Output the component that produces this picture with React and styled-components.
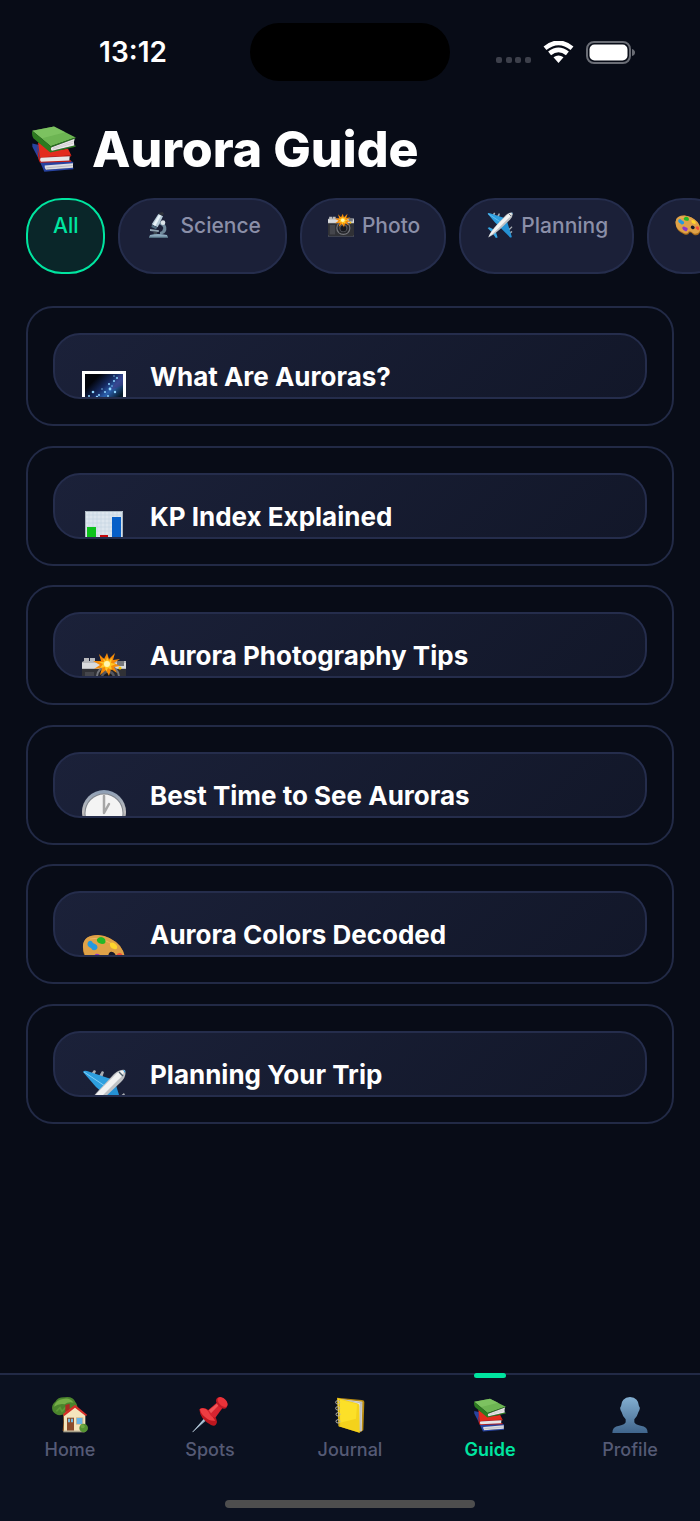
import React, { useCallback, useState } from 'react';
import styled, { createGlobalStyle } from 'styled-components'

const GlobalStyle = createGlobalStyle`
	* {
		box-sizing: border-box;
	}
	body {
		margin: 0;
		background: #080c17;
		color: #fff;
		font-family: Inter, "Liberation Sans", sans-serif;
	}
	button {
		font-family: inherit;
		cursor: pointer;
	}
	svg {
		display: block;
		flex-shrink: 0;
	}
`

const Screen = styled.div`
	display: flex;
	flex-direction: column;
	min-height: 100vh;
	overflow: hidden;
`

/* status bar */
const StatusBar = styled.header`
	display: grid;
	grid-template-columns: 1fr 200px 1fr;
	align-items: center;
	padding-top: 23px;
`
const Clock = styled.time`
	padding-left: 16px;
	font-size: 28px;
	line-height: 36px;
	font-weight: 600;
	text-align: center;
`
const Island = styled.div`
	height: 58px;
	border-radius: 29px;
	background: #000;
`
const StatusIcons = styled.div`
	display: flex;
	justify-content: flex-end;
	align-items: center;
	gap: 12px;
	padding-right: 64px;
`

/* heading */
const Title = styled.h1`
	display: flex;
	align-items: center;
	gap: 10px;
	margin: 0;
	padding: 36px 26px 0;
	font-size: 50px;
	line-height: 64px;
	font-weight: 800;
`
const TitleIcon = styled.span`
	display: flex;
	justify-content: center;
	width: 56px;
`

/* filter chips */
const Chips = styled.div`
	display: flex;
	gap: 13px;
	padding: 17px 26px 32px;
	overflow: hidden;
`
const Chip = styled.button`
	display: flex;
	flex-shrink: 0;
	align-items: flex-start;
	gap: 8px;
	height: 76px;
	padding: ${props => props.$icon ? '12px 24px 12px 26px' : '12px 25px'};
	border: 2px solid ${props => props.$active ? '#00e5a0' : '#252d4c'};
	border-radius: 36px;
	background: ${props => props.$active ? '#0a2629' : '#1b2038'};
	color: ${props => props.$active ? '#00e5a0' : '#8b8fa8'};
	font-size: 21px;
	line-height: 27px;
	font-weight: 500;
`

/* guide list */
const Main = styled.main`
	flex: 1;
`
const List = styled.div`
	display: flex;
	flex-direction: column;
	justify-content: space-between;
	min-height: 818px;
	padding: 0 26px;
`
const Card = styled.article`
	padding: 25px;
	border: 2px solid #222a46;
	border-radius: 27px;
`
const CardHead = styled.button`
	display: flex;
	align-items: flex-start;
	gap: 24px;
	width: 100%;
	height: 66px;
	padding: 27px 27px 0;
	border: 2px solid #252d4c;
	border-radius: 27px;
	background: linear-gradient(135deg, #1b2139, #121729);
	color: #fff;
	text-align: left;
	overflow: hidden;
`
const CardIcon = styled.span`
	padding-top: 9px;
`
const CardTitle = styled.span`
	font-size: 26px;
	line-height: 30px;
	font-weight: 700;
`

/* bottom tabs */
const TabBar = styled.footer`
	border-top: 2px solid #222a46;
	background: #0b1120;
`
const Tabs = styled.nav`
	display: grid;
	grid-template-columns: repeat(5, 1fr);
`
const Tab = styled.a`
	position: relative;
	display: flex;
	flex-direction: column;
	align-items: center;
	gap: 5px;
	padding-top: 22px;
	color: ${props => props.$active ? '#00e5a0' : '#555a75'};
	font-size: 18px;
	line-height: 24px;
	font-weight: ${props => props.$active ? 600 : 500};
	text-decoration: none;
`
const Marker = styled.span`
	position: absolute;
	top: -2px;
	width: 32px;
	height: 5px;
	border-radius: 3px;
	background: #00e5a0;
`
const HomeIndicator = styled.div`
	width: 250px;
	height: 8px;
	margin: 38px auto 13px;
	border-radius: 4px;
	background: #4e4e4e;
`

const Books = ({ width, height }) => (
	<svg width={ width } height={ height } viewBox="0 0 132 137" aria-hidden="true">
		<path d="M1 52L28 58 124 108 123 114 42 120 44 131 124 124 124 129 37 137Q20 96 1 62Z" fill="#2743a0" />
		<path d="M38 118L123 111 123 125 42 131Q37 124 38 118Z" fill="#dcdde2" />
		<path d="M43 125L122 118" stroke="#a5a7b4" strokeWidth="2" />
		<path d="M18 48L62 74 108 68 118 88 24 94Z" fill="#e32b1c" />
		<path d="M18 48Q16 72 23 93L118 87 117 91 28 96Q24 102 28 105L117 102 118 107 24 110Q14 94 18 48Z" fill="#c51d13" />
		<path d="M26 95L113 90 112 103 27 107Q22 101 26 95Z" fill="#e8e6e6" />
		<path d="M1 14L66 1 131 34 56 60Z" fill="#6db553" />
		<path d="M1 14L66 1 100 18 30 36Z" fill="#83c767" opacity=".7" />
		<path d="M1 14L56 60 131 33 130 37 61 62Q55 68 60 74L130 57 131 62 55 79 4 36Q-2 24 1 14Z" fill="#2c7a1f" />
		<path d="M59 63L128 38Q124 48 127 58L60 74Q54 68 59 63Z" fill="#eceaea" />
		<path d="M62 69L124 51M62 66L125 45" stroke="#b7b3b4" strokeWidth="1.5" />
	</svg>
)

const Microscope = () => (
	<svg width="26" height="26" viewBox="0 0 78 78" aria-hidden="true">
		<path d="M42 28Q64 36 61 54 58 66 42 68L42 60Q51 57 52 48 50 40 38 37Z" fill="#70899b" />
		<path d="M37 3L50 0 54 6 44 14Z" fill="#30343c" />
		<path d="M37 6L51 13 35 46 17 37Z" fill="#b6cad8" />
		<path d="M39 8L45 11 28 42 21 38Z" fill="#e9f3f9" />
		<path d="M18 38L34 46 30 52 16 45Z" fill="#4f6b80" />
		<circle cx="51" cy="32" r="7" fill="#dce4e9" />
		<path d="M12 51L39 55 38 60 12 57Z" fill="#92a5b2" />
		<path d="M22 59L34 60 33 69 24 69Z" fill="#3d4852" />
		<path d="M12 69Q35 63 63 69L66 77 9 77Z" fill="#8ba9bd" />
		<path d="M9 74H66V78H9Z" fill="#526d80" />
	</svg>
)

const Camera = ({ size }) => (
	<svg width={ size } height={ size } viewBox="0 0 44 44" aria-hidden="true">
		<path d="M2 11V8H7V11H8V8H13V11H44V41H0V12Z" fill="#b9babd" />
		<path d="M0 19H44V39Q44 41 42 41H2Q0 41 0 39Z" fill="#303136" />
		<path d="M0 13H44V18H0Z" fill="#d9dadc" />
		<path d="M3 22H12V38H3Z" fill="#45464c" />
		<path d="M35 11H42V16H35Z" fill="#76787c" />
		<circle cx="26" cy="27" r="12" fill="#74767c" />
		<circle cx="26" cy="27" r="10" fill="#26272c" />
		<circle cx="26" cy="27" r="7" fill="#54565e" />
		<circle cx="26" cy="28" r="5" fill="#17181d" />
		<circle cx="38" cy="18" r="1.5" fill="#ffc400" />
		<path d="M25 3L27 9 33 3 31 10 38 9 32 13 38 16 32 17 35 23 29 19 27 26 24 20 18 25 20 18 12 19 18 15 11 11 19 11 17 4 22 9Z" fill="#f58a08" />
		<path d="M25 7L27 11 30 8 29 13 34 14 29 16 30 20 26 18 24 22 23 17 18 18 21 14 17 12 22 12 21 8 24 11Z" fill="#ffc927" />
		<circle cx="25" cy="14" r="3" fill="#fff7b0" />
	</svg>
)

const Plane = ({ size }) => (
	<svg width={ size } height={ size } viewBox="0 0 44 44" aria-hidden="true">
		<path d="M9 5L12 1 14 2 12 7ZM17 7L20 2 22 3 20 9ZM36 29L42 24 43 26 38 31ZM36 35L42 32 43 34 38 38Z" fill="#a9adb2" />
		<path d="M1 3Q2 1 5 2L32 11 21 24 14 18Z" fill="#2e9fdf" />
		<path d="M33 13L42 42Q42 44 39 43L21 25Z" fill="#2592d5" />
		<path d="M1 27L4 26 14 31 18 43 15 44 9 35Z" fill="#35a6e4" />
		<path d="M2 3L23 17" stroke="#83d0f7" strokeWidth="1" />
		<path d="M2 43Q5 34 17 21L32 5Q38 0 43 1 45 7 39 13L22 29Q11 39 2 43Z" fill="#bfc1c4" />
		<path d="M3 42Q7 33 19 20L33 6Q38 1 42 2 42 6 36 11L19 28Q9 38 3 42Z" fill="#f2f2f2" />
		<path d="M37 3L41 7" stroke="#4a5c69" strokeWidth="1.5" />
		<path d="M41 1Q44 1 43 4Z" fill="#2e9fdf" />
	</svg>
)

const Palette = ({ size }) => (
	<svg width={ size } height={ size } viewBox="0 0 44 44" aria-hidden="true">
		<path d="M1 17Q2 6 16 6 29 7 38 17 45 27 42 35 38 42 31 38 26 33 24 35 23 40 16 38 0 32 1 17Z" fill="#a86a1b" />
		<path d="M1 16Q2 6 16 6 29 7 38 17 44 25 42 32 38 39 31 36 26 31 23 33 22 38 16 36 0 30 1 16Z" fill="#dfa248" />
		<path d="M8 10Q20 7 34 18" fill="none" stroke="#efba64" strokeWidth="1" />
		<ellipse cx="30" cy="26" rx="3.5" ry="3" transform="rotate(35 30 26)" fill="#17182a" />
		<path d="M6 13Q9 10 11 14 17 16 15 20 11 23 9 19 4 17 6 13Z" fill="#2499df" />
		<path d="M15 10Q19 6 23 10 25 15 20 15 14 14 15 10Z" fill="#23b827" />
		<path d="M28 14Q32 12 35 17 36 21 32 20 27 19 28 14Z" fill="#ffd52c" />
		<path d="M35 25Q40 22 41 28 40 33 37 29 34 29 35 25Z" fill="#f3503c" />
		<path d="M12 27Q14 23 18 26 24 27 20 32 15 34 12 27Z" fill="#8d37c7" />
	</svg>
)

const MilkyWay = () => (
	<svg width="44" height="44" viewBox="0 0 44 44" aria-hidden="true">
		<defs>
			<linearGradient id="sky" x1="0" y1="0" x2="1" y2="1">
				<stop offset=".2" stopColor="#02040b" />
				<stop offset=".42" stopColor="#172c66" />
				<stop offset=".55" stopColor="#2b60ae" />
				<stop offset=".75" stopColor="#071b2b" />
			</linearGradient>
		</defs>
		<path d="M0 0H44V44H0Z" fill="#fff" />
		<path d="M3 3H41V41H3Z" fill="url(#sky)" />
		<path d="M36 5L41 3V14L29 19Z" fill="#403981" opacity=".6" />
		<g fill="#8fd6ff">
			<circle cx="35" cy="7" r="1" /><circle cx="32" cy="10" r="1" /><circle cx="32" cy="5" r=".7" />
			<circle cx="27" cy="13" r="1" /><circle cx="28" cy="18" r="1.4" /><circle cx="33" cy="21" r="1.2" />
			<circle cx="23" cy="21" r="1" /><circle cx="17" cy="24" r="1" /><circle cx="11" cy="21" r="1.3" />
			<circle cx="26" cy="25" r="1" /><circle cx="7" cy="25" r="1" /><circle cx="20" cy="18" r=".7" />
			<circle cx="15" cy="26" r="1.2" /><circle cx="30" cy="15" r=".7" />
		</g>
	</svg>
)

const Chart = () => (
	<svg width="44" height="44" viewBox="0 0 44 44" aria-hidden="true">
		<path d="M3 0H41V44H3Z" fill="#dde6ee" />
		<path d="M7 1V44M11 1V44M15 1V44M19 1V44M23 1V44M27 1V44M31 1V44M35 1V44M39 1V44M4 4H40M4 8H40M4 12H40M4 16H40M4 20H40M4 24H40M4 28H40" stroke="#c3d3e0" strokeWidth=".6" />
		<path d="M5 16H14V44H5Z" fill="#0cc21b" />
		<path d="M18 24H26V44H18Z" fill="#c5080c" />
		<path d="M30 6H39V44H30Z" fill="#075fc8" />
		<path d="M3.5 44V.5H40.5V44" fill="none" stroke="#aab6c0" />
	</svg>
)

const ClockFace = () => (
	<svg width="44" height="44" viewBox="0 0 44 44" aria-hidden="true">
		<defs>
			<linearGradient id="rim" x1="0" y1="0" x2="0" y2="1">
				<stop offset="0" stopColor="#8b9db4" />
				<stop offset=".5" stopColor="#c1bfbf" />
				<stop offset="1" stopColor="#83807f" />
			</linearGradient>
		</defs>
		<circle cx="22" cy="22" r="22" fill="url(#rim)" />
		<circle cx="22" cy="23" r="19.5" fill="#80858c" />
		<circle cx="22" cy="23" r="18.5" fill="#f4f4f4" />
		<path d="M22 6V23L27 14" fill="none" stroke="#a6a6a6" strokeWidth="2.5" strokeLinecap="round" strokeLinejoin="round" />
	</svg>
)

const House = () => (
	<svg width="36" height="36" viewBox="0 0 108 108" aria-hidden="true">
		<path d="M33 50H48V102H32Q36 74 33 50Z" fill="#94612c" />
		<path d="M2 42Q-4 24 10 14 18 0 38 1 62-3 70 15 82 28 72 44 58 57 38 52 13 60 2 42Z" fill="#4b842d" />
		<path d="M6 29Q12 8 33 6 53 1 65 17 48 13 38 22 20 19 6 29Z" fill="#75ae47" />
		<path d="M13 43L24 32 30 43 43 29 53 40" fill="none" stroke="#5e9a38" strokeWidth="5" />
		<path d="M40 24L53 20V38L40 45Z" fill="#a92a22" />
		<path d="M36 50L69 26 100 52V104H36Z" fill="#f5e5bd" />
		<path d="M33 51L69 23 106 54 101 57 69 32 37 57Z" fill="#d52e28" />
		<path d="M45 62H66V101H45Z" fill="#8b4c2b" />
		<path d="M48 65H54V76H48ZM57 65H63V76H57Z" fill="#75bce3" />
		<path d="M72 61H94V83H72Z" fill="#d4b787" />
		<path d="M74 63H91V81H74Z" fill="#68b5e8" />
		<path d="M34 101H98V106H34Z" fill="#aaa28b" />
		<circle cx="95" cy="93" r="13" fill="#559332" />
		<circle cx="92" cy="88" r="6" fill="#71ab43" />
	</svg>
)

const Pin = () => (
	<svg width="36" height="36" viewBox="0 0 108 108" aria-hidden="true">
		<path d="M0 107L42 57 50 64Z" fill="#91abc0" />
		<path d="M2 105L44 61" stroke="#dbe8f2" strokeWidth="2" />
		<path d="M22 37Q34 27 50 40 72 54 75 75 72 91 57 84 24 67 22 37Z" fill="#bd171f" />
		<path d="M24 36Q37 29 51 44L70 71Q54 74 39 60 25 50 24 36Z" fill="#ed3d42" />
		<path d="M48 40L77 15 93 31 70 62Q54 61 48 40Z" fill="#d82430" />
		<path d="M51 40L78 17 83 22 57 49Z" fill="#f05557" />
		<ellipse cx="89" cy="18" rx="13" ry="20" transform="rotate(-45 89 18)" fill="#bf1a25" />
		<ellipse cx="92" cy="15" rx="11" ry="18" transform="rotate(-45 92 15)" fill="#e93239" />
	</svg>
)

const Notebook = () => (
	<svg width="36" height="36" viewBox="0 0 108 108" aria-hidden="true">
		<path d="M15 2L89 9Q97 9 97 15L94 100 82 107 20 88Z" fill="#b88b10" />
		<path d="M22 6L91 14 89 103 79 102Z" fill="#e4e5e6" />
		<path d="M29 8L90 18M85 18L83 102M88 16L86 103" stroke="#a4a6a8" strokeWidth="2" />
		<path d="M16 3L75 19Q82 20 82 26L83 107 20 88Z" fill="#f4d21c" />
		<path d="M18 6L75 22 72 65 22 78Z" fill="#ffe52e" opacity=".7" />
		<path d="M22 8L23 87" stroke="#c69b12" strokeWidth="2" />
		<g fill="none" stroke="#b8b5a7" strokeWidth="3">
			<ellipse cx="17" cy="16" rx="6" ry="5" /><ellipse cx="17" cy="34" rx="6" ry="5" />
			<ellipse cx="18" cy="52" rx="6" ry="5" /><ellipse cx="18" cy="73" rx="6" ry="5" />
		</g>
	</svg>
)

const Bust = () => (
	<svg width="36" height="36" viewBox="0 0 108 108" aria-hidden="true">
		<defs>
			<linearGradient id="bust" x1="0" y1="0" x2="0" y2="1">
				<stop offset="0" stopColor="#83afd1" />
				<stop offset="1" stopColor="#40658c" />
			</linearGradient>
		</defs>
		<path d="M54 0Q80 2 81 28 87 33 79 46 76 59 67 67V76Q69 83 86 86 108 89 107 108H1Q0 89 22 86 39 83 41 76V67Q32 59 29 46 21 33 27 28 28 2 54 0Z" fill="url(#bust)" />
	</svg>
)

const SignalDots = () => (
	<svg width="35" height="22" viewBox="0 0 35 22" aria-hidden="true">
		<g fill="#3d404b">
			<rect x="0" y="16" width="6" height="6" rx="2" /><rect x="10" y="16" width="6" height="6" rx="2" />
			<rect x="19" y="16" width="6" height="6" rx="2" /><rect x="29" y="16" width="6" height="6" rx="2" />
		</g>
	</svg>
)

const Wifi = () => (
	<svg width="31" height="22" viewBox="0 0 31 22" aria-hidden="true">
		<path d="M10.5 16.3Q15.5 12.7 20.5 16.3L15.5 22Z" fill="#fff" />
		<path d="M6.6 12.4Q15.5 5.2 24.4 12.4M2 7.2Q15.5-3.6 29 7.2" fill="none" stroke="#fff" strokeWidth="4.6" />
	</svg>
)

const Battery = () => (
	<svg width="50" height="23" viewBox="0 0 50 23" aria-hidden="true">
		<rect x="1" y="1" width="43" height="21" rx="7" fill="none" stroke="#6a6d75" strokeWidth="2" />
		<rect x="3.5" y="3.5" width="38" height="16" rx="5" fill="#fff" />
		<path d="M46 8Q49 9 49 11.5 49 14 46 15Z" fill="#6a6d75" />
	</svg>
)

const filters = [
	{ name: 'All' },
	{ name: 'Science', icon: <Microscope /> },
	{ name: 'Photo', icon: <Camera size={ 26 } /> },
	{ name: 'Planning', icon: <Plane size={ 26 } /> },
	{ name: '', label: 'Colors', icon: <Palette size={ 26 } /> },
]

const guides = [
	{ title: 'What Are Auroras?', icon: <MilkyWay /> },
	{ title: 'KP Index Explained', icon: <Chart /> },
	{ title: 'Aurora Photography Tips', icon: <Camera size={ 44 } /> },
	{ title: 'Best Time to See Auroras', icon: <ClockFace /> },
	{ title: 'Aurora Colors Decoded', icon: <Palette size={ 44 } /> },
	{ title: 'Planning Your Trip', icon: <Plane size={ 44 } /> },
]

const tabs = [
	{ name: 'Home', icon: <House /> },
	{ name: 'Spots', icon: <Pin /> },
	{ name: 'Journal', icon: <Notebook /> },
	{ name: 'Guide', icon: <Books width={ 32 } height={ 36 } /> },
	{ name: 'Profile', icon: <Bust /> },
]

const App = () => {
	const [filter, setFilter] = useState('All')
	const [tab, setTab] = useState('Guide')

	const handleTab = useCallback((e, name) => {
		e.preventDefault()
		setTab(name)
	}, [])

	return (
		<Screen>
			<GlobalStyle />
			<StatusBar>
				<Clock>13:12</Clock>
				<Island />
				<StatusIcons>
					<SignalDots />
					<Wifi />
					<Battery />
				</StatusIcons>
			</StatusBar>
			<Main>
				<Title>
					<TitleIcon><Books width={ 44 } height={ 46 } /></TitleIcon>
					Aurora Guide
				</Title>
				<Chips>
					{ filters.map(v => (
						<Chip key={ v.name } type="button" aria-label={ v.label } $icon={ !!v.icon } $active={ v.name === filter } onClick={ () => setFilter(v.name) }>
							{ v.icon }
							{ v.name }
						</Chip>
					)) }
				</Chips>
				<List>
					{ guides.map(v => (
						<Card key={ v.title }>
							<CardHead type="button">
								<CardIcon>{ v.icon }</CardIcon>
								<CardTitle>{ v.title }</CardTitle>
							</CardHead>
						</Card>
					)) }
				</List>
			</Main>
			<TabBar>
				<Tabs>
					{ tabs.map(v => (
						<Tab key={ v.name } href={ `#${v.name.toLowerCase()}` } $active={ v.name === tab } onClick={ e => handleTab(e, v.name) }>
							{ v.name === tab ? <Marker /> : '' }
							{ v.icon }
							{ v.name }
						</Tab>
					)) }
				</Tabs>
				<HomeIndicator />
			</TabBar>
		</Screen>
	)
}

export default App
